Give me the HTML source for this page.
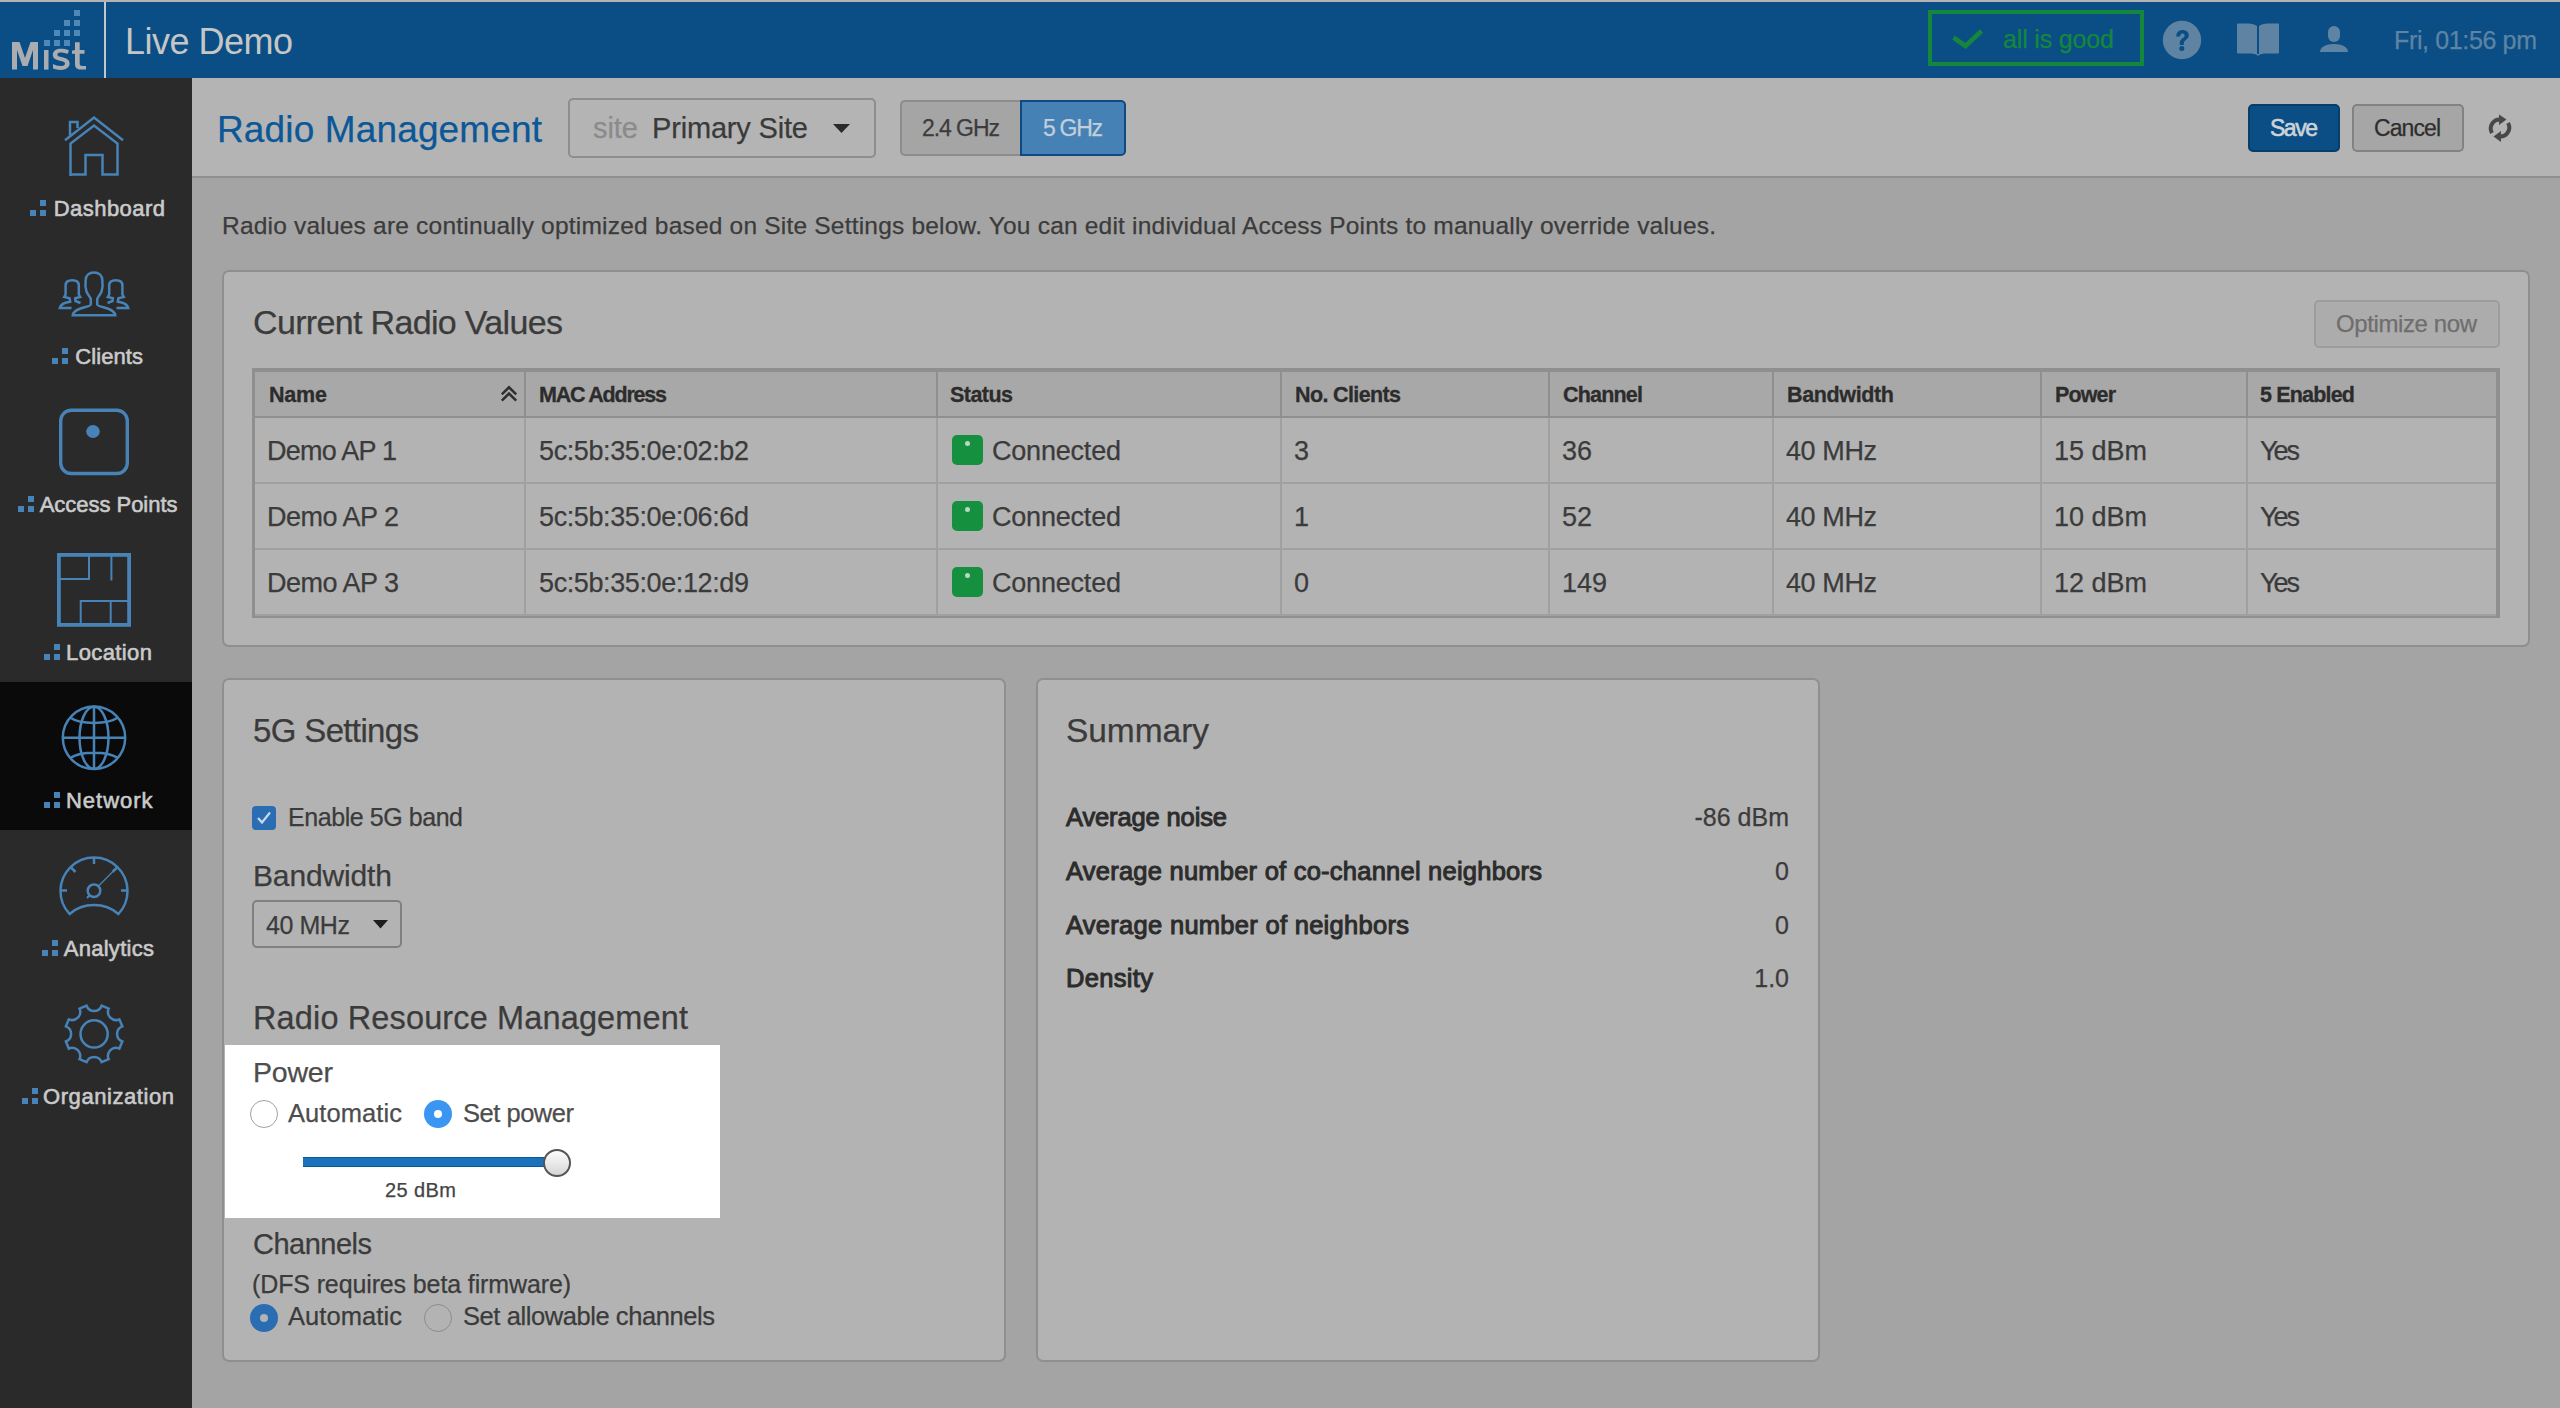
<!DOCTYPE html>
<html><head><meta charset="utf-8"><title>Radio Management</title>
<style>
html,body{margin:0;padding:0;width:2560px;height:1408px;overflow:hidden;background:#a4a4a4;}
body{position:relative;font-family:"Liberation Sans",sans-serif;}
.t{position:absolute;white-space:nowrap;line-height:normal;-webkit-text-stroke:0.25px currentColor;}
</style></head><body>
<div style="position:absolute;left:0px;top:0px;width:2560px;height:2px;background:#b4b4b4"></div><div style="position:absolute;left:0px;top:2px;width:2560px;height:76px;background:#0a4e85"></div><div style="position:absolute;left:104px;top:2px;width:2px;height:76px;background:#c6c6c6"></div><svg style="position:absolute;left:0;top:0" width="104" height="78">
<g fill="#4f87b7">
<rect x="74" y="10" width="6" height="6"/>
<rect x="64" y="20" width="6" height="6"/><rect x="74" y="20" width="6" height="6"/>
<rect x="54" y="30" width="6" height="6"/><rect x="64" y="30" width="6" height="6"/><rect x="74" y="30" width="6" height="6"/>
<rect x="44" y="40" width="6" height="6"/><rect x="54" y="40" width="6" height="6"/><rect x="64" y="40" width="6" height="6"/>
</g>
<g fill="#a9adb1">
<path d="M12 69.6 V42 H19.5 L25 58 L30.5 42 H38 V69.6 H33 V50 L27.5 66 H22.5 L17 50 V69.6 Z"/>
<rect x="44" y="50" width="4.5" height="19.6"/>
<path d="M69 50.5 C66 49 63 48.8 60.5 48.8 C55.5 48.8 52.8 51.5 52.8 54.7 C52.8 62 65 59.5 65 63.5 C65 65.5 63 66 60.5 66 C58 66 55 65.2 53 64 V68.6 C55 69.5 58 70 60.5 70 C66.5 70 69.6 67.2 69.6 63.3 C69.6 56 57.4 58.4 57.4 54.5 C57.4 53 58.8 52.6 60.8 52.6 C63 52.6 65.5 53.2 67.5 54 Z"/>
<path d="M75 42.3 H79.7 V50 H84.5 V53.8 H79.7 V63.5 C79.7 65.3 80.7 66 82.3 66 H86 V69.6 H81 C77 69.6 75 67.8 75 64 V53.8 H72 V50.8 L75 50 Z"/>
</g></svg><div class="t" style="left:125px;top:21.42px;font-size:36px;color:#c6c6c6;letter-spacing:-0.51px;-webkit-text-stroke:0;">Live Demo</div><div style="position:absolute;left:1928px;top:10px;width:216px;height:56px;box-sizing:border-box;border:4px solid #15873d"></div><svg style="position:absolute;left:1948px;top:26px" width="40" height="26"><path d="M5.5 11.5 L17.5 20 L33.5 5" fill="none" stroke="#15873d" stroke-width="4.6"/></svg><div class="t" style="left:2003px;top:25.38px;font-size:25px;color:#15873d;letter-spacing:-0.158px;">all is good</div><svg style="position:absolute;left:2162px;top:20px" width="40" height="40"><circle cx="20" cy="20" r="19.2" fill="#5f84a3"/>
<path d="M14.2 16.5 C14.2 12.3 17 10 20.5 10 C24 10 26.8 12.2 26.8 15.3 C26.8 19.5 21.8 20 21.8 23.5 V25 H17.8 V23 C17.8 18.5 22.6 18.3 22.6 15.6 C22.6 14.2 21.8 13.4 20.4 13.4 C19 13.4 18.2 14.3 18.1 16.5 Z" fill="#0a4e85"/>
<circle cx="19.8" cy="28.6" r="2.5" fill="#0a4e85"/></svg><svg style="position:absolute;left:2236px;top:22px" width="44" height="36">
<path d="M1 2 C1 1.5 1.5 1.5 2 1.5 L12 1.5 C16 1.5 19 2.5 21 4 L21 33 C19 32 17 31.5 14 31.5 L2 31.5 C1.5 31.5 1 31 1 30.5 Z" fill="#5f84a3"/>
<path d="M43 2 C43 1.5 42.5 1.5 42 1.5 L32 1.5 C28 1.5 25 2.5 23 4 L23 33 C25 32 27 31.5 30 31.5 L42 31.5 C42.5 31.5 43 31 43 30.5 Z" fill="#5f84a3"/>
<path d="M20 32 L22 34 L24 32 Z" fill="#5f84a3"/></svg><svg style="position:absolute;left:2318px;top:24px" width="32" height="30">
<rect x="10" y="2" width="12" height="16" rx="6" fill="#5f84a3"/>
<path d="M2 28 C2 23 8 20 16 20 C24 20 30 23 30 28 Z" fill="#5f84a3"/></svg><div class="t" style="left:2394px;top:26.38px;font-size:25px;color:#5f84a3;letter-spacing:-0.357px;">Fri, 01:56 pm</div><div style="position:absolute;left:0px;top:78px;width:192px;height:1330px;background:#2a2a2a"></div><div style="position:absolute;left:0px;top:682px;width:192px;height:148px;background:#0a0a0a"></div><div class="t" style="left:53.7px;top:196.09px;font-size:22px;color:#cacaca;letter-spacing:0.459px;-webkit-text-stroke:0.6px #cacaca;">Dashboard</div><div style="position:absolute;left:30px;top:210px;width:6px;height:6px;background:#4783b6"></div><div style="position:absolute;left:40px;top:210px;width:6px;height:6px;background:#4783b6"></div><div style="position:absolute;left:40px;top:200px;width:6px;height:6px;background:#4783b6"></div><div class="t" style="left:75.2px;top:344.09px;font-size:22px;color:#cacaca;letter-spacing:0.092px;-webkit-text-stroke:0.6px #cacaca;">Clients</div><div style="position:absolute;left:52px;top:358px;width:6px;height:6px;background:#4783b6"></div><div style="position:absolute;left:62px;top:358px;width:6px;height:6px;background:#4783b6"></div><div style="position:absolute;left:62px;top:348px;width:6px;height:6px;background:#4783b6"></div><div class="t" style="left:39.7px;top:492.09px;font-size:22px;color:#cacaca;letter-spacing:-0.031px;-webkit-text-stroke:0.6px #cacaca;">Access Points</div><div style="position:absolute;left:18px;top:506px;width:6px;height:6px;background:#4783b6"></div><div style="position:absolute;left:28px;top:506px;width:6px;height:6px;background:#4783b6"></div><div style="position:absolute;left:28px;top:496px;width:6px;height:6px;background:#4783b6"></div><div class="t" style="left:66px;top:640.09px;font-size:22px;color:#cacaca;letter-spacing:0.403px;-webkit-text-stroke:0.6px #cacaca;">Location</div><div style="position:absolute;left:44px;top:654px;width:6px;height:6px;background:#4783b6"></div><div style="position:absolute;left:54px;top:654px;width:6px;height:6px;background:#4783b6"></div><div style="position:absolute;left:54px;top:644px;width:6px;height:6px;background:#4783b6"></div><div class="t" style="left:66px;top:788.09px;font-size:22px;color:#cacaca;letter-spacing:0.986px;-webkit-text-stroke:0.6px #cacaca;">Network</div><div style="position:absolute;left:44px;top:802px;width:6px;height:6px;background:#4783b6"></div><div style="position:absolute;left:54px;top:802px;width:6px;height:6px;background:#4783b6"></div><div style="position:absolute;left:54px;top:792px;width:6px;height:6px;background:#4783b6"></div><div class="t" style="left:63.7px;top:936.09px;font-size:22px;color:#cacaca;letter-spacing:0.283px;-webkit-text-stroke:0.6px #cacaca;">Analytics</div><div style="position:absolute;left:42px;top:950px;width:6px;height:6px;background:#4783b6"></div><div style="position:absolute;left:52px;top:950px;width:6px;height:6px;background:#4783b6"></div><div style="position:absolute;left:52px;top:940px;width:6px;height:6px;background:#4783b6"></div><div class="t" style="left:43px;top:1084.09px;font-size:22px;color:#cacaca;letter-spacing:0.569px;-webkit-text-stroke:0.6px #cacaca;">Organization</div><div style="position:absolute;left:22px;top:1098px;width:6px;height:6px;background:#4783b6"></div><div style="position:absolute;left:32px;top:1098px;width:6px;height:6px;background:#4783b6"></div><div style="position:absolute;left:32px;top:1088px;width:6px;height:6px;background:#4783b6"></div><svg style="position:absolute;left:0;top:78px" width="192" height="1330">
<g transform="translate(0,-78)">
<!-- house -->
<path d="M65 140.2 L94 117.5 L123 140.2" fill="none" stroke="#4783b6" stroke-width="2.5"/>
<path d="M70 135.5 V122 H77.5 V128" fill="none" stroke="#4783b6" stroke-width="2.5"/>
<path d="M70.5 176 V143.5 L94 125.5 L117.5 143.5 V174.5 H102.5 V155 H85.5 V174.5 H70.5" fill="none" stroke="#4783b6" stroke-width="2.5"/>
<!-- clients -->
<path d="M90.8 304.5 L90.8 299.5 C90.8 297 86.8 294.5 86.2 290.5 L85.8 288 C85 287 85.6 285 85.6 283 L85.6 280.5 C85.6 275.5 89 272.6 94 272.6 C99 272.6 102.4 275.5 102.4 280.5 L102.4 283 C102.4 285 103 287 102.2 288 L101.8 290.5 C101.2 294.5 97.2 297 97.2 299.5 L97.2 304.5 C97.2 306 103 307 107.5 308.5 C112.5 310.3 115 312.5 115.3 315.3 L72.7 315.3 C73 312.5 75.5 310.3 80.5 308.5 C85 307 90.8 306 90.8 304.5 Z" fill="none" stroke="#4783b6" stroke-width="2.5"/>
<path d="M80.5 303 L75.5 301 L75.2 298.3 L80.2 297 L78.8 294.5 L78.8 285.5 C78.8 282 76 280.3 72.2 280.3 C68.4 280.3 65.6 282 65.6 285.5 L65.6 294.5 L64.2 297 L69.6 298.3 L70.2 301.8 L67.5 302.3 C62.5 303.5 60.3 305.5 59.8 308 L71.5 308" fill="none" stroke="#4783b6" stroke-width="2.5"/>
<path d="M107.5 303 L112.5 301 L112.8 298.3 L107.8 297 L109.2 294.5 L109.2 285.5 C109.2 282 112 280.3 115.8 280.3 C119.6 280.3 122.4 282 122.4 285.5 L122.4 294.5 L123.8 297 L118.4 298.3 L117.8 301.8 L120.5 302.3 C125.5 303.5 127.7 305.5 128.2 308 L116.5 308" fill="none" stroke="#4783b6" stroke-width="2.5"/>
<!-- AP -->
<rect x="60.7" y="410.3" width="66.6" height="63.2" rx="10.5" fill="none" stroke="#4783b6" stroke-width="3.4"/>
<ellipse cx="93" cy="431.5" rx="6.8" ry="6.5" fill="#4783b6"/>
<!-- location -->
<rect x="58.9" y="554.9" width="70.2" height="70" fill="none" stroke="#4783b6" stroke-width="3.8"/>
<path d="M89 556 V579 H60 M111.4 556 V580.5 M79.7 601 H131 M80.7 601 V625 M110.7 601 V625" fill="none" stroke="#4783b6" stroke-width="2"/>
<!-- globe -->
<circle cx="94" cy="737.8" r="31.2" fill="none" stroke="#4783b6" stroke-width="2.5"/>
<path d="M94 706.6 V769 M63 737.8 H125 M71 718 C80 724.5 108 724.5 117 718 M71 757.6 C80 751 108 751 117 757.6" fill="none" stroke="#4783b6" stroke-width="2.5"/>
<ellipse cx="94" cy="737.8" rx="14.5" ry="31" fill="none" stroke="#4783b6" stroke-width="2.5"/>
<!-- analytics -->
<path d="M69.6 914 A33.5 33.5 0 1 1 118.4 914 C105 902 83 902 69.6 914 Z" fill="none" stroke="#4783b6" stroke-width="2.5" stroke-linejoin="miter"/>
<path d="M94 858 V864 M61 890.5 H67 M121 890.5 H127 M71 867.5 L75.5 872 M117 867.5 L112.5 872" fill="none" stroke="#4783b6" stroke-width="2.5"/>
<circle cx="94" cy="890.7" r="6.3" fill="none" stroke="#4783b6" stroke-width="2.5"/>
<path d="M98.5 886 L112.5 872" fill="none" stroke="#4783b6" stroke-width="1.3"/>
<path d="M89.6 895.2 L87 898" fill="none" stroke="#4783b6" stroke-width="2.2"/>
<!-- gear -->
<circle cx="94.1" cy="1033.9" r="13.6" fill="none" stroke="#4783b6" stroke-width="2.5"/>
<path id="gear" d="M86.54 1005.69 A8.09 8.09 0 0 0 101.66 1005.69 L108.70 1008.61 A8.09 8.09 0 0 0 119.39 1019.30 L122.31 1026.34 A8.09 8.09 0 0 0 122.31 1041.46 L119.39 1048.50 A8.09 8.09 0 0 0 108.70 1059.19 L101.66 1062.11 A8.09 8.09 0 0 0 86.54 1062.11 L79.50 1059.19 A8.09 8.09 0 0 0 68.81 1048.50 L65.89 1041.46 A8.09 8.09 0 0 0 65.89 1026.34 L68.81 1019.30 A8.09 8.09 0 0 0 79.50 1008.61 Z" fill="none" stroke="#4783b6" stroke-width="2.5"/>
</g></svg><div style="position:absolute;left:192px;top:78px;width:2368px;height:99px;background:#b4b4b4"></div><div style="position:absolute;left:192px;top:176px;width:2368px;height:2px;background:#8f8f8f"></div><div class="t" style="left:217px;top:108.52px;font-size:37px;color:#0c5797;letter-spacing:0.138px;">Radio Management</div><div style="position:absolute;left:568px;top:98px;width:308px;height:60px;box-sizing:border-box;border:2px solid #8e8e8e;border-radius:5px"></div><div class="t" style="left:593px;top:111.75px;font-size:29px;color:#8b8b8b;letter-spacing:-0.043px;">site</div><div class="t" style="left:652px;top:111.75px;font-size:29px;color:#3a3a3a;letter-spacing:-0.175px;">Primary Site</div><svg style="position:absolute;left:833px;top:124px" width="18" height="10"><path d="M0 0 H17 L8.5 9 Z" fill="#2a2a2a"/></svg><div style="position:absolute;left:900px;top:100px;width:122px;height:56px;box-sizing:border-box;background:#a5a5a5;border:2px solid #8c8c8c;border-right:none;border-radius:5px 0 0 5px"></div><div style="position:absolute;left:1020px;top:100px;width:106px;height:56px;box-sizing:border-box;background:#4581b4;border:2px solid #0d4b80;border-radius:0 5px 5px 0"></div><div class="t" style="left:922px;top:115.19px;font-size:23px;color:#3c3c3c;letter-spacing:-1.061px;">2.4 GHz</div><div class="t" style="left:1043px;top:115.19px;font-size:23px;color:#c3cfda;letter-spacing:-1.295px;">5 GHz</div><div style="position:absolute;left:2248px;top:104px;width:92px;height:48px;box-sizing:border-box;background:#0a4e85;border:2px solid #073d69;border-radius:5px"></div><div class="t" style="left:2270px;top:114.69px;font-size:23px;color:#cdd3d9;letter-spacing:-1.475px;-webkit-text-stroke:0.6px #cdd3d9;">Save</div><div style="position:absolute;left:2352px;top:104px;width:112px;height:48px;box-sizing:border-box;background:#a6a6a6;border:2px solid #828282;border-radius:5px"></div><div class="t" style="left:2374px;top:114.69px;font-size:23px;color:#2e2e2e;letter-spacing:-0.919px;">Cancel</div><svg style="position:absolute;left:2486px;top:114px" width="28" height="28">
<path d="M6 19 A9 9 0 0 1 14.5 5.5" fill="none" stroke="#484848" stroke-width="4"/>
<path d="M13 0.5 L20.5 5.5 L13 11 Z" fill="#484848"/>
<path d="M22 9 A9 9 0 0 1 13.5 22.5" fill="none" stroke="#484848" stroke-width="4"/>
<path d="M15 17 L7.5 22.5 L15 28 Z" fill="#484848"/>
</svg><div style="position:absolute;left:192px;top:178px;width:2368px;height:1230px;background:#a4a4a4"></div><div class="t" style="left:222px;top:211.83px;font-size:24.5px;color:#3b3b3b;letter-spacing:0.203px;">Radio values are continually optimized based on Site Settings below. You can edit individual Access Points to manually override values.</div><div style="position:absolute;left:222px;top:270px;width:2308px;height:377px;box-sizing:border-box;background:#b3b3b3;border:2px solid #8f8f8f;border-radius:7px"></div><div class="t" style="left:253px;top:303.23px;font-size:34px;color:#3b3b3b;letter-spacing:-0.66px;">Current Radio Values</div><div style="position:absolute;left:2314px;top:300px;width:186px;height:48px;box-sizing:border-box;background:#acacac;border:2px solid #9d9d9d;border-radius:5px"></div><div class="t" style="left:2336px;top:309.78px;font-size:24px;color:#6e6e6e;letter-spacing:-0.399px;">Optimize now</div><div style="position:absolute;left:252px;top:368px;width:2248px;height:250px;box-sizing:border-box;border:3px solid #8f8f8f;border-top-width:4px;border-right-width:4px;border-bottom-width:2px"></div><div style="position:absolute;left:255px;top:372px;width:2241px;height:44px;background:#a8a8a8"></div><div style="position:absolute;left:255px;top:416px;width:2241px;height:2px;background:#8f8f8f"></div><div style="position:absolute;left:255px;top:482px;width:2241px;height:2px;background:#a0a0a0"></div><div style="position:absolute;left:255px;top:548px;width:2241px;height:2px;background:#a0a0a0"></div><div style="position:absolute;left:255px;top:614px;width:2241px;height:2px;background:#a0a0a0"></div><div style="position:absolute;left:524px;top:372px;width:2px;height:44px;background:#8f8f8f"></div><div style="position:absolute;left:524px;top:418px;width:2px;height:196px;background:#a0a0a0"></div><div style="position:absolute;left:936px;top:372px;width:2px;height:44px;background:#8f8f8f"></div><div style="position:absolute;left:936px;top:418px;width:2px;height:196px;background:#a0a0a0"></div><div style="position:absolute;left:1280px;top:372px;width:2px;height:44px;background:#8f8f8f"></div><div style="position:absolute;left:1280px;top:418px;width:2px;height:196px;background:#a0a0a0"></div><div style="position:absolute;left:1548px;top:372px;width:2px;height:44px;background:#8f8f8f"></div><div style="position:absolute;left:1548px;top:418px;width:2px;height:196px;background:#a0a0a0"></div><div style="position:absolute;left:1772px;top:372px;width:2px;height:44px;background:#8f8f8f"></div><div style="position:absolute;left:1772px;top:418px;width:2px;height:196px;background:#a0a0a0"></div><div style="position:absolute;left:2040px;top:372px;width:2px;height:44px;background:#8f8f8f"></div><div style="position:absolute;left:2040px;top:418px;width:2px;height:196px;background:#a0a0a0"></div><div style="position:absolute;left:2246px;top:372px;width:2px;height:44px;background:#8f8f8f"></div><div style="position:absolute;left:2246px;top:418px;width:2px;height:196px;background:#a0a0a0"></div><div class="t" style="left:269px;top:382.54px;font-size:21.5px;color:#2c2c2c;font-weight:700;-webkit-text-stroke:0.3px currentColor;letter-spacing:-0.186px;">Name</div><div class="t" style="left:539px;top:382.54px;font-size:21.5px;color:#2c2c2c;font-weight:700;-webkit-text-stroke:0.3px currentColor;letter-spacing:-1.217px;">MAC Address</div><div class="t" style="left:950px;top:382.54px;font-size:21.5px;color:#2c2c2c;font-weight:700;-webkit-text-stroke:0.3px currentColor;letter-spacing:-0.542px;">Status</div><div class="t" style="left:1295px;top:382.54px;font-size:21.5px;color:#2c2c2c;font-weight:700;-webkit-text-stroke:0.3px currentColor;letter-spacing:-0.629px;">No. Clients</div><div class="t" style="left:1563px;top:382.54px;font-size:21.5px;color:#2c2c2c;font-weight:700;-webkit-text-stroke:0.3px currentColor;letter-spacing:-0.803px;">Channel</div><div class="t" style="left:1787px;top:382.54px;font-size:21.5px;color:#2c2c2c;font-weight:700;-webkit-text-stroke:0.3px currentColor;letter-spacing:-0.359px;">Bandwidth</div><div class="t" style="left:2055px;top:382.54px;font-size:21.5px;color:#2c2c2c;font-weight:700;-webkit-text-stroke:0.3px currentColor;letter-spacing:-0.88px;">Power</div><div class="t" style="left:2260px;top:382.54px;font-size:21.5px;color:#2c2c2c;font-weight:700;-webkit-text-stroke:0.3px currentColor;letter-spacing:-0.82px;">5 Enabled</div><svg style="position:absolute;left:500px;top:385px" width="18" height="18"><path d="M1.8 9.3 L9 2.3 L16.2 9.3 M1.8 15.6 L9 8.6 L16.2 15.6" fill="none" stroke="#2e2e2e" stroke-width="2.5"/></svg><div class="t" style="left:267px;top:435.56px;font-size:27px;color:#3b3b3b;letter-spacing:-0.761px;">Demo AP 1</div><div class="t" style="left:539px;top:435.56px;font-size:27px;color:#3b3b3b;letter-spacing:-0.387px;">5c:5b:35:0e:02:b2</div><div style="position:absolute;left:952px;top:435px;width:31px;height:30px;background:#14903f;border-radius:5px"></div><div style="position:absolute;left:965px;top:441px;width:5px;height:5px;background:#b9d6c1;border-radius:2.5px"></div><div class="t" style="left:992px;top:435.56px;font-size:27px;color:#3b3b3b;letter-spacing:-0.2px;">Connected</div><div class="t" style="left:1294px;top:435.56px;font-size:27px;color:#3b3b3b;">3</div><div class="t" style="left:1562px;top:435.56px;font-size:27px;color:#3b3b3b;">36</div><div class="t" style="left:1786px;top:435.56px;font-size:27px;color:#3b3b3b;letter-spacing:-0.405px;">40 MHz</div><div class="t" style="left:2054px;top:435.56px;font-size:27px;color:#3b3b3b;letter-spacing:-0.011px;">15 dBm</div><div class="t" style="left:2260px;top:435.56px;font-size:27px;color:#3b3b3b;letter-spacing:-2.024px;">Yes</div><div class="t" style="left:267px;top:501.56px;font-size:27px;color:#3b3b3b;letter-spacing:-0.511px;">Demo AP 2</div><div class="t" style="left:539px;top:501.56px;font-size:27px;color:#3b3b3b;letter-spacing:-0.387px;">5c:5b:35:0e:06:6d</div><div style="position:absolute;left:952px;top:501px;width:31px;height:30px;background:#14903f;border-radius:5px"></div><div style="position:absolute;left:965px;top:507px;width:5px;height:5px;background:#b9d6c1;border-radius:2.5px"></div><div class="t" style="left:992px;top:501.56px;font-size:27px;color:#3b3b3b;letter-spacing:-0.2px;">Connected</div><div class="t" style="left:1294px;top:501.56px;font-size:27px;color:#3b3b3b;">1</div><div class="t" style="left:1562px;top:501.56px;font-size:27px;color:#3b3b3b;">52</div><div class="t" style="left:1786px;top:501.56px;font-size:27px;color:#3b3b3b;letter-spacing:-0.405px;">40 MHz</div><div class="t" style="left:2054px;top:501.56px;font-size:27px;color:#3b3b3b;letter-spacing:-0.011px;">10 dBm</div><div class="t" style="left:2260px;top:501.56px;font-size:27px;color:#3b3b3b;letter-spacing:-2.024px;">Yes</div><div class="t" style="left:267px;top:567.57px;font-size:27px;color:#3b3b3b;letter-spacing:-0.511px;">Demo AP 3</div><div class="t" style="left:539px;top:567.57px;font-size:27px;color:#3b3b3b;letter-spacing:-0.387px;">5c:5b:35:0e:12:d9</div><div style="position:absolute;left:952px;top:567px;width:31px;height:30px;background:#14903f;border-radius:5px"></div><div style="position:absolute;left:965px;top:573px;width:5px;height:5px;background:#b9d6c1;border-radius:2.5px"></div><div class="t" style="left:992px;top:567.57px;font-size:27px;color:#3b3b3b;letter-spacing:-0.2px;">Connected</div><div class="t" style="left:1294px;top:567.57px;font-size:27px;color:#3b3b3b;">0</div><div class="t" style="left:1562px;top:567.57px;font-size:27px;color:#3b3b3b;">149</div><div class="t" style="left:1786px;top:567.57px;font-size:27px;color:#3b3b3b;letter-spacing:-0.405px;">40 MHz</div><div class="t" style="left:2054px;top:567.57px;font-size:27px;color:#3b3b3b;letter-spacing:-0.011px;">12 dBm</div><div class="t" style="left:2260px;top:567.57px;font-size:27px;color:#3b3b3b;letter-spacing:-2.024px;">Yes</div><div style="position:absolute;left:222px;top:678px;width:784px;height:684px;box-sizing:border-box;background:#b3b3b3;border:2px solid #8f8f8f;border-radius:7px"></div><div class="t" style="left:253px;top:712.13px;font-size:33px;color:#3b3b3b;letter-spacing:-0.643px;">5G Settings</div><div style="position:absolute;left:252px;top:806px;width:24px;height:24px;background:#2b6db3;border-radius:4px"></div><svg style="position:absolute;left:252px;top:806px" width="24" height="23"><path d="M6 12 L10 16.5 L18 6.5" fill="none" stroke="#c8d8ea" stroke-width="2.2"/></svg><div class="t" style="left:288px;top:803.38px;font-size:25px;color:#3b3b3b;letter-spacing:-0.439px;">Enable 5G band</div><div class="t" style="left:253px;top:858.85px;font-size:30px;color:#3b3b3b;letter-spacing:-0.138px;">Bandwidth</div><div style="position:absolute;left:252px;top:900px;width:150px;height:48px;box-sizing:border-box;border:2px solid #808080;border-radius:5px"></div><div class="t" style="left:266px;top:911.38px;font-size:25px;color:#3b3b3b;letter-spacing:-0.427px;">40 MHz</div><svg style="position:absolute;left:373px;top:920px" width="16" height="9"><path d="M0 0 H15 L7.5 8.5 Z" fill="#1e1e1e"/></svg><div class="t" style="left:253px;top:999.59px;font-size:32.5px;color:#3b3b3b;letter-spacing:0.134px;">Radio Resource Management</div><div class="t" style="left:253px;top:1227.76px;font-size:29px;color:#3b3b3b;letter-spacing:-0.505px;">Channels</div><div class="t" style="left:252px;top:1270.38px;font-size:25px;color:#3b3b3b;letter-spacing:-0.123px;">(DFS requires beta firmware)</div><div style="position:absolute;left:250px;top:1304px;width:28px;height:28px;box-sizing:border-box;background:#2b6db3;border-radius:50%"></div><div style="position:absolute;left:260px;top:1314px;width:8px;height:8px;background:#b3b3b3;border-radius:50%"></div><div class="t" style="left:288px;top:1301.92px;font-size:25.5px;color:#3b3b3b;letter-spacing:0.077px;">Automatic</div><div style="position:absolute;left:424px;top:1304px;width:28px;height:28px;box-sizing:border-box;border:1.5px solid #8c8c8c;border-radius:50%;background:#b3b3b3"></div><div class="t" style="left:463px;top:1301.92px;font-size:25.5px;color:#3b3b3b;letter-spacing:-0.421px;">Set allowable channels</div><div style="position:absolute;left:1036px;top:678px;width:784px;height:684px;box-sizing:border-box;background:#b3b3b3;border:2px solid #8f8f8f;border-radius:7px"></div><div class="t" style="left:1066px;top:711.68px;font-size:33.5px;color:#3b3b3b;letter-spacing:-0.055px;">Summary</div><div class="t" style="left:1066px;top:802.92px;font-size:25.5px;color:#2c2c2c;letter-spacing:-0.131px;-webkit-text-stroke:1.0px #2c2c2c;">Average noise</div><div class="t" style="right:771px;top:803.38px;font-size:25px;color:#3b3b3b;">-86 dBm</div><div class="t" style="left:1066px;top:856.92px;font-size:25.5px;color:#2c2c2c;letter-spacing:0.234px;-webkit-text-stroke:1.0px #2c2c2c;">Average number of co-channel neighbors</div><div class="t" style="right:771px;top:857.38px;font-size:25px;color:#3b3b3b;">0</div><div class="t" style="left:1066px;top:910.92px;font-size:25.5px;color:#2c2c2c;letter-spacing:0.288px;-webkit-text-stroke:1.0px #2c2c2c;">Average number of neighbors</div><div class="t" style="right:771px;top:911.38px;font-size:25px;color:#3b3b3b;">0</div><div class="t" style="left:1066px;top:963.92px;font-size:25.5px;color:#2c2c2c;letter-spacing:0.328px;-webkit-text-stroke:1.0px #2c2c2c;">Density</div><div class="t" style="right:771px;top:964.38px;font-size:25px;color:#3b3b3b;">1.0</div><div style="position:absolute;left:225px;top:1045px;width:495px;height:173px;background:#ffffff"></div><div class="t" style="left:253px;top:1056.21px;font-size:28.5px;color:#4d4d4d;letter-spacing:-0.197px;">Power</div><div style="position:absolute;left:250px;top:1100px;width:28px;height:28px;box-sizing:border-box;border:1.5px solid #a0a0a0;border-radius:50%;background:#fff"></div><div class="t" style="left:288px;top:1098.92px;font-size:25.5px;color:#4d4d4d;letter-spacing:0.077px;">Automatic</div><div style="position:absolute;left:424px;top:1100px;width:28px;height:28px;background:#3a95f3;border-radius:50%"></div><div style="position:absolute;left:434px;top:1110px;width:8px;height:8px;background:#fff;border-radius:50%"></div><div class="t" style="left:463px;top:1098.92px;font-size:25.5px;color:#4d4d4d;letter-spacing:-0.477px;">Set power</div><div style="position:absolute;left:303px;top:1157px;width:254px;height:10px;box-sizing:border-box;background:#1a72bd;border-top:1px solid #0d5797;border-bottom:1px solid #0d5797"></div><div style="position:absolute;left:543px;top:1149px;width:28px;height:28px;box-sizing:border-box;border:2px solid #555;border-radius:50%;background:linear-gradient(#fdfdfd,#d6d6d6)"></div><div class="t" style="left:385px;top:1179.40px;font-size:20px;color:#444;letter-spacing:0.414px;">25 dBm</div>
</body></html>
